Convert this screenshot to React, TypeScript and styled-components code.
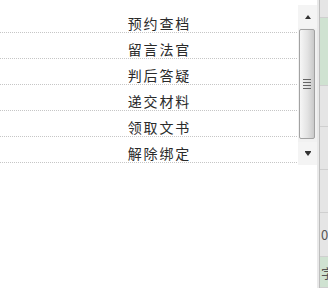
import styled, { createGlobalStyle } from "styled-components";

const items = ["预约查档", "留言法官", "判后答疑", "递交材料", "领取文书", "解除绑定"];

const GlobalStyle = createGlobalStyle`
  html, body {
    margin: 0;
    padding: 0;
    background: #fff;
    font-family: "Liberation Sans", "Noto Sans CJK SC", sans-serif;
  }
`;

const Page = styled.div`
  width: 328px;
  height: 288px;
  display: flex;
  overflow: hidden;
`;

const Dropdown = styled.div`
  width: 317px;
  height: 288px;
  background: #fff;
  display: flex;
  align-items: flex-start;
  padding-top: 5px;
  box-sizing: border-box;
`;

const List = styled.ul`
  list-style: none;
  margin: 2px 0 0;
  padding: 0;
  width: 297px;
`;

const Item = styled.li`
  height: 26px;
  box-sizing: border-box;
  border-bottom: 1px dotted #c6c6c6;
  padding: 6px 106px 0 0;
  text-align: right;
  font-family: "Noto Sans CJK SC", sans-serif;
  font-size: 14px;
  line-height: 20px;
  letter-spacing: 1.8px;
  color: #2a2a2a;
`;

const Scrollbar = styled.div`
  width: 19px;
  margin-left: 1px;
  height: 160px;
  background: #f1f1f1;
  display: flex;
  flex-direction: column;
`;

const ArrowButton = styled.div<{ $down?: boolean }>`
  height: 23px;
  display: flex;
  align-items: center;
  justify-content: center;
  background: #f4f4f4;
  &::after {
    content: "";
    width: 0;
    height: 0;
    border-left: 3.5px solid transparent;
    border-right: 3.5px solid transparent;
    ${({ $down }) =>
      $down
        ? "border-top: 4px solid #333; box-shadow: 0 -1px 0 #333;"
        : "border-bottom: 4px solid #333;"}
  }
`;

const Thumb = styled.div`
  height: 110px;
  margin: 1px 0 0 1px;
  width: 16px;
  box-sizing: border-box;
  border: 1px solid #a2a2a2;
  border-radius: 2px;
  background: linear-gradient(to right, #f6f6f6, #e2e2e2 55%, #c9c9c9);
  display: flex;
  flex-direction: column;
  align-items: center;
  justify-content: center;
  gap: 2px;
`;

const Grip = styled.span`
  width: 8px;
  height: 1px;
  background: #666;
`;

const Track = styled.div`
  flex: 1;
`;

const Side = styled.div`
  width: 11px;
  height: 288px;
  background: #e6e6e6;
  display: flex;
  overflow: hidden;
`;

const Divider = styled.div`
  width: 2px;
  background: #e9e9e9;
  border-right: 1px solid #bdbdbd;
`;

const Cells = styled.div`
  flex: 1;
  display: flex;
  flex-direction: column;
  overflow: hidden;
`;

const Cell = styled.div<{ $h: number; $green?: boolean }>`
  height: ${({ $h }) => $h}px;
  flex-shrink: 0;
  box-sizing: border-box;
  border-bottom: 1px solid #cfcfcf;
  background: ${({ $green }) => ($green ? "#cfe2d1" : "#e5e5e5")};
  font-family: "Noto Sans CJK SC", sans-serif;
  font-size: 13px;
  color: #555;
  white-space: nowrap;
  display: flex;
  align-items: center;
  padding-left: 1px;
`;

export default function App() {
  return (
    <>
      <GlobalStyle />
      <Page>
        <Dropdown>
          <List>
            {items.map((t) => (
              <Item key={t}>{t}</Item>
            ))}
          </List>
          <Scrollbar>
            <ArrowButton />
            <Thumb>
              <Grip />
              <Grip />
              <Grip />
              <Grip />
            </Thumb>
            <Track />
            <ArrowButton $down />
          </Scrollbar>
        </Dropdown>
        <Side>
          <Divider />
          <Cells>
            <Cell $h={18} />
            <Cell $h={68} $green />
            <Cell $h={41} />
            <Cell $h={43} />
            <Cell $h={43} />
            <Cell $h={44}>0.00</Cell>
            <Cell $h={31} $green>
              字段
            </Cell>
          </Cells>
        </Side>
      </Page>
    </>
  );
}
